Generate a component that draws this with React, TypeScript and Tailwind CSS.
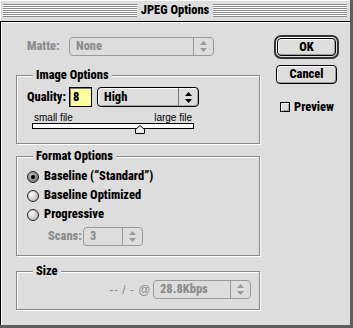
import React from "react";

const charcoal = "font-['Roboto','Liberation_Sans',sans-serif] font-stretch-[76%] font-extrabold text-[12.5px]";

function Arrows({ disabled }: { disabled?: boolean }) {
  const c = disabled ? "#9a9a9a" : "#000";
  return (
    <svg width="7" height="11" viewBox="0 0 7 11">
      <path d="M3.5 0L7 4H0z" fill={c} />
      <path d="M3.5 11L7 7H0z" fill={c} />
    </svg>
  );
}

function Popup({ label, className, disabled }: { label: string; className: string; disabled?: boolean }) {
  return (
    <div
      className={`flex h-[19px] items-stretch rounded-[4px] border bg-[#dddddd] ${
        disabled ? "border-[#9a9a9a] text-[#8c8c8c]" : "border-black text-black shadow-[inset_1px_1px_0_#fff,inset_-1px_-1px_0_#aaa]"
      } ${className}`}
    >
      <span className={`flex flex-1 items-center pl-[6px] ${charcoal}`}>{label}</span>
      <span className={`flex w-[20px] items-center justify-center border-l ${disabled ? "border-[#9a9a9a]" : "border-[#777]"}`}>
        <Arrows disabled={disabled} />
      </span>
    </div>
  );
}

function Group({ title, className, children }: { title: string; className: string; children?: React.ReactNode }) {
  return (
    <div className={`relative border border-[#888] shadow-[inset_1px_1px_0_#fff,1px_1px_0_#fff] ${className}`}>
      <span className={`absolute -top-[8px] left-[16px] bg-[#dddddd] px-[3px] leading-[14px] ${charcoal}`}>{title}</span>
      {children}
    </div>
  );
}

function Radio({ checked, label }: { checked?: boolean; label: string }) {
  return (
    <div className="flex h-[19px] items-center gap-[5px]">
      <span
        className={`flex h-[12px] w-[12px] items-center justify-center rounded-full border border-[#222] ${
          checked
            ? "bg-[radial-gradient(circle_at_35%_35%,#bbb,#666)]"
            : "bg-[radial-gradient(circle_at_35%_35%,#fff,#c8c8c8_60%,#999)]"
        }`}
      >
        {checked && <span className="h-[4px] w-[4px] rounded-full bg-black" />}
      </span>
      <span className={`leading-none ${charcoal}`}>{label}</span>
    </div>
  );
}

export default function App() {
  return (
    <div className="flex h-[328px] w-[353px] flex-col overflow-hidden border-b-[3px] border-r-[3px] border-[#5e5e5e] bg-[#dddddd] text-black">
      {/* title bar */}
      <div className="flex h-[22px] shrink-0 items-center border-b border-black px-[3px] shadow-[inset_1px_1px_0_#fff]">
        <div className="h-[13px] flex-1 bg-[repeating-linear-gradient(to_bottom,#8c8c8c_0px,#8c8c8c_1px,#ffffff_1px,#ffffff_2px)]" />
        <span className={`px-[4px] leading-none ${charcoal}`}>JPEG Options</span>
        <div className="h-[13px] flex-1 bg-[repeating-linear-gradient(to_bottom,#8c8c8c_0px,#8c8c8c_1px,#ffffff_1px,#ffffff_2px)]" />
      </div>

      {/* body */}
      <div className="flex flex-1 border-l border-black pl-[15px] shadow-[inset_1px_1px_0_#fff]">
        <div className="flex w-[244px] flex-col">
          <div className="mt-[15px] flex h-[19px] items-center pl-[11px]">
            <span className={`w-[42px] text-[#8c8c8c] ${charcoal}`}>Matte:</span>
            <Popup label="None" className="w-[145px]" disabled />
          </div>

          <Group title="Image Options" className="mt-[19px] h-[69px]">
            <div className="mt-[11px] flex h-[20px] items-center pl-[10px]">
              <span className={`w-[42px] ${charcoal}`}>Quality:</span>
              <span className={`flex h-[20px] w-[23px] items-center border border-black bg-[#ffffa0] pl-[3px] shadow-[inset_1px_1px_0_#777] ${charcoal}`}>8</span>
              <Popup label="High" className="ml-[5px] h-[20px] w-[102px]" />
            </div>
            <div className="ml-[15px] mt-[6px] w-[162px]">
              <div className="flex justify-between px-[2px] font-['Liberation_Sans',sans-serif] text-[10px] leading-[10px]">
                <span>small file</span>
                <span>large file</span>
              </div>
              <div className="relative h-[6px] border border-black bg-white">
                <svg className="absolute left-[102px] top-[1px]" width="10" height="9" viewBox="0 0 10 9">
                  <path d="M5 0.5L9.5 4.5V8.5H0.5V4.5z" fill="#eee" stroke="#000" />
                </svg>
              </div>
            </div>
          </Group>

          <Group title="Format Options" className="mt-[12px] h-[100px]">
            <div className="mt-[10px] flex flex-col pl-[10px]">
              <Radio checked label={"Baseline (\u201cStandard\u201d)"} />
              <Radio label="Baseline Optimized" />
              <Radio label="Progressive" />
            </div>
            <div className="mt-[3px] flex h-[19px] items-center pl-[31px]">
              <span className={`w-[35px] text-[#8c8c8c] ${charcoal}`}>Scans:</span>
              <Popup label="3" className="w-[60px]" disabled />
            </div>
          </Group>

          <Group title="Size" className="mt-[15px] h-[39px]">
            <div className="mt-[8px] flex h-[19px] items-center justify-end gap-[2px] pr-[8px]">
              <span className="font-['Liberation_Sans',sans-serif] text-[12px] tracking-[0.5px] text-[#8c8c8c]">-- / - @</span>
              <Popup label="28.8Kbps" className="w-[98px]" disabled />
            </div>
          </Group>
        </div>

        <div className="ml-[14px] flex flex-col">
          <div className="mt-[13px] h-[24px] w-[65px] rounded-[7px] border-[2px] border-[#333] p-[1px] shadow-[inset_1px_1px_0_#fff]">
            <button className={`flex h-full w-full items-center justify-center rounded-[4px] border border-black bg-[#dddddd] shadow-[inset_1px_1px_0_#fff,inset_-1px_-1px_0_#999] ${charcoal}`}>
              OK
            </button>
          </div>
          <button className={`ml-[2px] mt-[6px] flex h-[19px] w-[61px] items-center justify-center rounded-[4px] border border-black bg-[#dddddd] shadow-[inset_1px_1px_0_#fff,inset_-1px_-1px_0_#999] ${charcoal}`}>
            Cancel
          </button>
          <div className="ml-[6px] mt-[17px] flex items-center gap-[4px]">
            <span className="h-[10px] w-[10px] border border-black bg-[#dddddd] shadow-[inset_1px_1px_0_#fff,inset_-1px_-1px_0_#aaa]" />
            <span className={`leading-none ${charcoal}`}>Preview</span>
          </div>
        </div>
      </div>
    </div>
  );
}
